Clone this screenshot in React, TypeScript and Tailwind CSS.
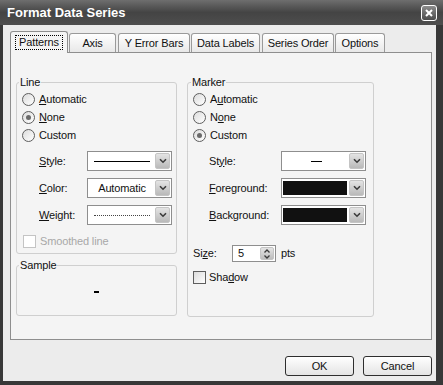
import type { ReactNode } from "react";

const TABS = [
  { label: "Patterns", w: "w-[58px]", ml: "ml-0", active: true },
  { label: "Axis", w: "w-[47px]", ml: "ml-px", active: false },
  { label: "Y Error Bars", w: "w-[72px]", ml: "ml-[2px]", active: false },
  { label: "Data Labels", w: "w-[69px]", ml: "ml-px", active: false },
  { label: "Series Order", w: "w-[72px]", ml: "ml-[2px]", active: false },
  { label: "Options", w: "w-[50px]", ml: "ml-px", active: false },
];

function Chevron() {
  return (
    <svg width="8" height="6" viewBox="0 0 8 6">
      <path d="M1 1.2 L4 4.2 L7 1.2" fill="none" stroke="#3a3a3a" strokeWidth="1.6" />
    </svg>
  );
}

/** XP-style combo box: white field plus the grey arrow button on the right. */
function Combo({ children }: { children?: ReactNode }) {
  return (
    <div className="flex h-[20px] w-[85px] border border-[#8e8e8e] bg-white p-px">
      <div className="flex flex-1 items-center justify-center overflow-hidden">{children}</div>
      <div className="flex w-[15px] items-center justify-center rounded-[2px] border border-[#c4c4c4] bg-gradient-to-b from-[#e4e4e4] to-[#b9b9b9]">
        <Chevron />
      </div>
    </div>
  );
}

function Radio({ checked, children }: { checked?: boolean; children: ReactNode }) {
  return (
    <div className="flex h-[18px] items-center gap-[4px]">
      <span className="flex h-[13px] w-[13px] items-center justify-center rounded-full border border-[#5e5e5e] bg-gradient-to-br from-[#dcdcdc] to-white">
        {checked && <span className="h-[5px] w-[5px] rounded-full bg-[#6a6a6a]" />}
      </span>
      <span>{children}</span>
    </div>
  );
}

function Row({ label, lw, children }: { label: ReactNode; lw: string; children: ReactNode }) {
  return (
    <div className="flex items-center">
      <span className={lw}>{label}</span>
      {children}
    </div>
  );
}

const Swatch = () => <div className="mr-[2px] h-[14px] w-full bg-[#111]" />;

export default function App() {
  return (
    <div className="flex h-[385px] w-[443px] flex-col overflow-hidden bg-[#383838] font-['Liberation_Sans',Arial,sans-serif] text-[11px] leading-[13px] tracking-[-0.15px] text-[#111]">
      {/* title bar */}
      <div className="flex h-[25px] shrink-0 items-center justify-between bg-gradient-to-b from-[#6e6e6e] via-[#444] to-[#4e4e4e] pl-[7px] pr-[6px]">
        <span className="text-[13px] font-bold tracking-normal text-white">Format Data Series</span>
        <span className="flex h-[16px] w-[16px] items-center justify-center rounded-[3px] border border-white bg-gradient-to-b from-[#8c8c8c] to-[#4c4c4c]">
          <svg width="8" height="8" viewBox="0 0 8 8">
            <path d="M1 1 L7 7 M7 1 L1 7" stroke="white" strokeWidth="2" />
          </svg>
        </span>
      </div>

      <div className="mb-[4px] ml-[3px] mr-[7px] flex flex-1 flex-col bg-[#ececec]">
        {/* tab strip */}
        <div className="flex items-end pl-[7px] pt-[6px]">
          {TABS.map((t) =>
            t.active ? (
              <div
                key={t.label}
                className={`relative z-10 -mb-px flex h-[22px] ${t.w} ${t.ml} items-center justify-center rounded-t-[3px] border border-b-0 border-[#8e8e8e] bg-[#f4f4f4]`}
              >
                <span className="border border-dotted border-black px-[3px]">{t.label}</span>
              </div>
            ) : (
              <div
                key={t.label}
                className={`flex h-[19px] ${t.w} ${t.ml} items-center justify-center rounded-t-[3px] border border-b-0 border-[#9a9a9a] bg-gradient-to-b from-white to-[#e8e8e8]`}
              >
                {t.label}
              </div>
            )
          )}
        </div>

        {/* tab page */}
        <div className="ml-[7px] mr-[4px] flex h-[288px] gap-[10px] border border-[#8e8e8e] bg-[#f4f4f4] pl-[5px] pt-[23px]">
          <div className="flex flex-col gap-[5px]">
            <fieldset className="h-[178px] w-[161px] rounded-[3px] border border-[#cfcfcf]">
              <legend className="ml-[2px] px-px">Line</legend>
              <div className="mt-px pl-[5px]">
                <Radio>
                  <u>A</u>utomatic
                </Radio>
                <Radio checked>
                  <u>N</u>one
                </Radio>
                <Radio>Custom</Radio>
              </div>
              <div className="mt-[7px] flex flex-col gap-[7px] pl-[22px]">
                <Row lw="w-[48px]" label={<><u>S</u>tyle:</>}>
                  <Combo>
                    <div className="h-px w-[56px] bg-black" />
                  </Combo>
                </Row>
                <Row lw="w-[48px]" label={<><u>C</u>olor:</>}>
                  <Combo>Automatic</Combo>
                </Row>
                <Row lw="w-[48px]" label={<><u>W</u>eight:</>}>
                  <Combo>
                    <div className="w-[56px] border-t border-dotted border-[#444]" />
                  </Combo>
                </Row>
              </div>
              <div className="mt-[8px] flex h-[16px] items-center gap-[4px] pl-[6px] text-[#a8a8a8]">
                <span className="h-[13px] w-[13px] border border-[#c4c4c4] bg-white" />
                Smoothed line
              </div>
            </fieldset>

            <fieldset className="h-[57px] w-[161px] rounded-[3px] border border-[#cfcfcf]">
              <legend className="ml-[2px] px-px">Sample</legend>
              <div className="flex h-[40px] items-center justify-center">
                <div className="h-[2px] w-[5px] bg-black" />
              </div>
            </fieldset>
          </div>

          <fieldset className="h-[241px] w-[187px] rounded-[3px] border border-[#cfcfcf]">
            <legend className="ml-[3px] px-px">Marker</legend>
            <div className="mt-px pl-[5px]">
              <Radio>
                A<u>u</u>tomatic
              </Radio>
              <Radio>
                N<u>o</u>ne
              </Radio>
              <Radio checked>Custom</Radio>
            </div>
            <div className="mt-[7px] flex flex-col gap-[7px] pl-[21px]">
              <Row lw="w-[72px]" label={<>St<u>y</u>le:</>}>
                <Combo>
                  <div className="h-px w-[11px] bg-black" />
                </Combo>
              </Row>
              <Row lw="w-[72px]" label={<><u>F</u>oreground:</>}>
                <Combo>
                  <Swatch />
                </Combo>
              </Row>
              <Row lw="w-[72px]" label={<><u>B</u>ackground:</>}>
                <Combo>
                  <Swatch />
                </Combo>
              </Row>
            </div>
            <div className="mt-[20px] flex items-center pl-[5px]">
              <span className="w-[39px]">
                Si<u>z</u>e:
              </span>
              <div className="flex h-[17px] w-[44px] border border-[#8e8e8e] bg-white p-px">
                <span className="flex-1 pl-[4px] leading-[13px]">5</span>
                <div className="flex w-[14px] flex-col items-center justify-center gap-[2px] rounded-[2px] border border-[#c4c4c4] bg-gradient-to-b from-[#e4e4e4] to-[#bdbdbd]">
                  <svg width="6" height="4" viewBox="0 0 6 4">
                    <path d="M0.5 3.5 L3 1 L5.5 3.5" fill="none" stroke="#3a3a3a" strokeWidth="1.3" />
                  </svg>
                  <svg width="6" height="4" viewBox="0 0 6 4">
                    <path d="M0.5 0.5 L3 3 L5.5 0.5" fill="none" stroke="#3a3a3a" strokeWidth="1.3" />
                  </svg>
                </div>
              </div>
              <span className="ml-[5px]">pts</span>
            </div>
            <div className="mt-[8px] flex h-[14px] items-center gap-[3px] pl-[5px]">
              <span className="h-[13px] w-[13px] border border-[#5e5e5e] bg-gradient-to-br from-[#dcdcdc] to-white" />
              <span>
                Sha<u>d</u>ow
              </span>
            </div>
          </fieldset>
        </div>

        {/* dialog buttons */}
        <div className="mt-[16px] flex justify-end gap-[9px] pr-[4px]">
          <button className="h-[20px] w-[69px] rounded-[3px] border border-[#2e2e2e] bg-gradient-to-b from-white to-[#e4e4e4]">
            OK
          </button>
          <button className="h-[20px] w-[69px] rounded-[3px] border border-[#2e2e2e] bg-gradient-to-b from-white to-[#e4e4e4]">
            Cancel
          </button>
        </div>
      </div>
    </div>
  );
}
